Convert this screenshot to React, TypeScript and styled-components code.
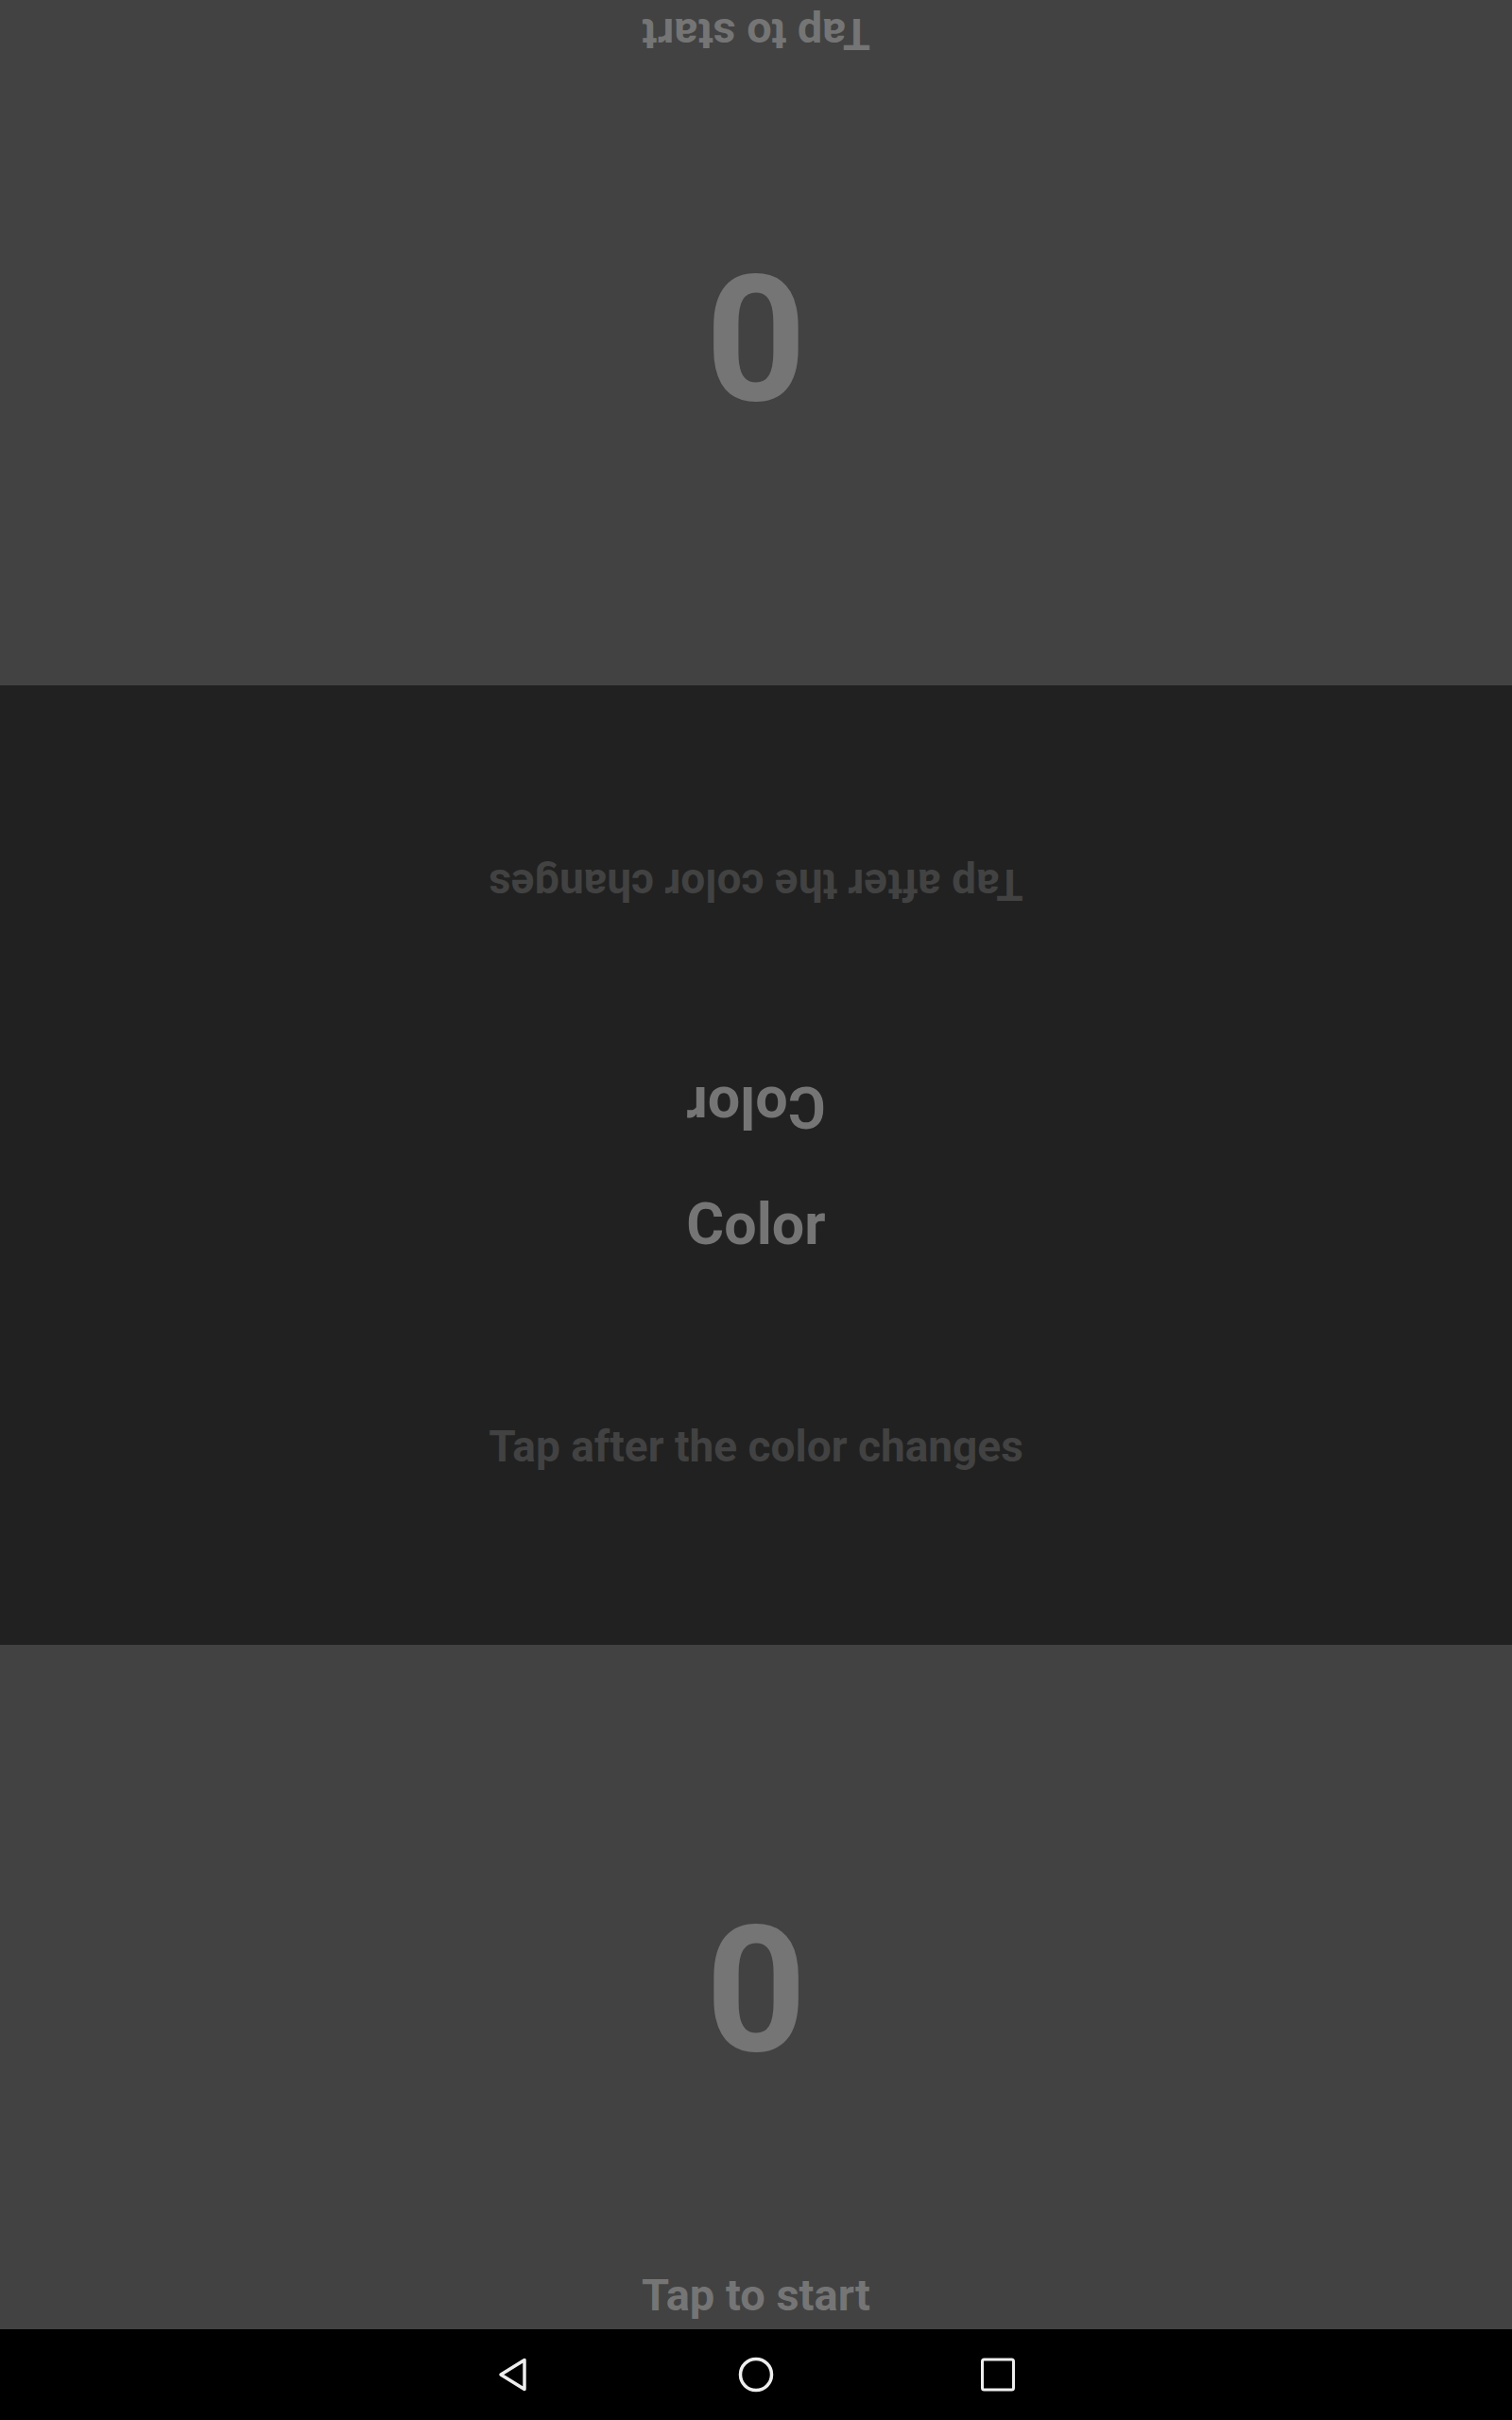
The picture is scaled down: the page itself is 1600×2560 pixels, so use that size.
import styled, { createGlobalStyle } from "styled-components";

const GlobalStyle = createGlobalStyle`
  html, body {
    margin: 0;
    padding: 0;
    background: #000;
  }
  body {
    font-family: Roboto, "Liberation Sans", sans-serif;
  }
`;

const Screen = styled.div`
  display: flex;
  flex-direction: column;
  width: 1600px;
  height: 2560px;
  overflow: hidden;
`;

const PlayerPanel = styled.div<{ $flipped?: boolean }>`
  display: grid;
  grid-template-areas: "stack";
  justify-items: center;
  height: ${(p) => (p.$flipped ? 725 : 724)}px;
  flex-shrink: 0;
  background: #424242;
  transform: ${(p) => (p.$flipped ? "rotate(180deg)" : "none")};
`;

const Score = styled.div<{ $shift: number }>`
  grid-area: stack;
  align-self: center;
  margin-top: ${(p) => p.$shift}px;
  font-size: 186px;
  line-height: 1;
  font-weight: 700;
  color: #757575;
`;

const StartLabel = styled.div`
  grid-area: stack;
  align-self: end;
  padding-bottom: 13px;
  font-size: 47px;
  line-height: 1;
  font-weight: 700;
  color: #757575;
`;

const Arena = styled.div`
  display: flex;
  flex-direction: column;
  height: 1015px;
  flex-shrink: 0;
  background: #212121;
`;

const ArenaHalf = styled.div<{ $flipped?: boolean }>`
  flex: 1;
  display: flex;
  flex-direction: column;
  align-items: center;
  padding-top: 32px;
  transform: ${(p) => (p.$flipped ? "rotate(180deg)" : "none")};
`;

const ColorWord = styled.div`
  font-size: 61px;
  line-height: 1;
  font-weight: 700;
  color: #757575;
`;

const Hint = styled.div`
  margin-top: 181px;
  font-size: 46px;
  line-height: 1;
  font-weight: 700;
  color: #424242;
`;

const NavBar = styled.div`
  flex: 1;
  display: flex;
  justify-content: center;
  align-items: center;
  background: #000;
`;

const NavButton = styled.div`
  width: 256px;
  height: 96px;
  display: flex;
  align-items: center;
  justify-content: center;
  color: #eeeeee;
`;

const iconProps = {
  width: 40,
  height: 40,
  viewBox: "0 0 40 40",
  fill: "none",
  stroke: "currentColor",
  strokeWidth: 3.5,
  strokeLinejoin: "round" as const,
};

function PlayerSide({ flipped }: { flipped?: boolean }) {
  return (
    <PlayerPanel $flipped={flipped}>
      <Score $shift={flipped ? 14 : 6}>0</Score>
      <StartLabel>Tap to start</StartLabel>
    </PlayerPanel>
  );
}

function ArenaSide({ flipped }: { flipped?: boolean }) {
  return (
    <ArenaHalf $flipped={flipped}>
      <ColorWord>Color</ColorWord>
      <Hint>Tap after the color changes</Hint>
    </ArenaHalf>
  );
}

export default function App() {
  return (
    <>
      <GlobalStyle />
      <Screen>
        <PlayerSide flipped />
        <Arena>
          <ArenaSide flipped />
          <ArenaSide />
        </Arena>
        <PlayerSide />
        <NavBar>
          <NavButton>
            <svg {...iconProps}>
              <path d="M31 4.5 L31 35.5 L6 20 Z" />
            </svg>
          </NavButton>
          <NavButton>
            <svg {...iconProps}>
              <circle cx="20" cy="20" r="16.5" />
            </svg>
          </NavButton>
          <NavButton>
            <svg {...iconProps} strokeWidth={3}>
              <rect x="3.5" y="4" width="33" height="32" rx="2" />
            </svg>
          </NavButton>
        </NavBar>
      </Screen>
    </>
  );
}
